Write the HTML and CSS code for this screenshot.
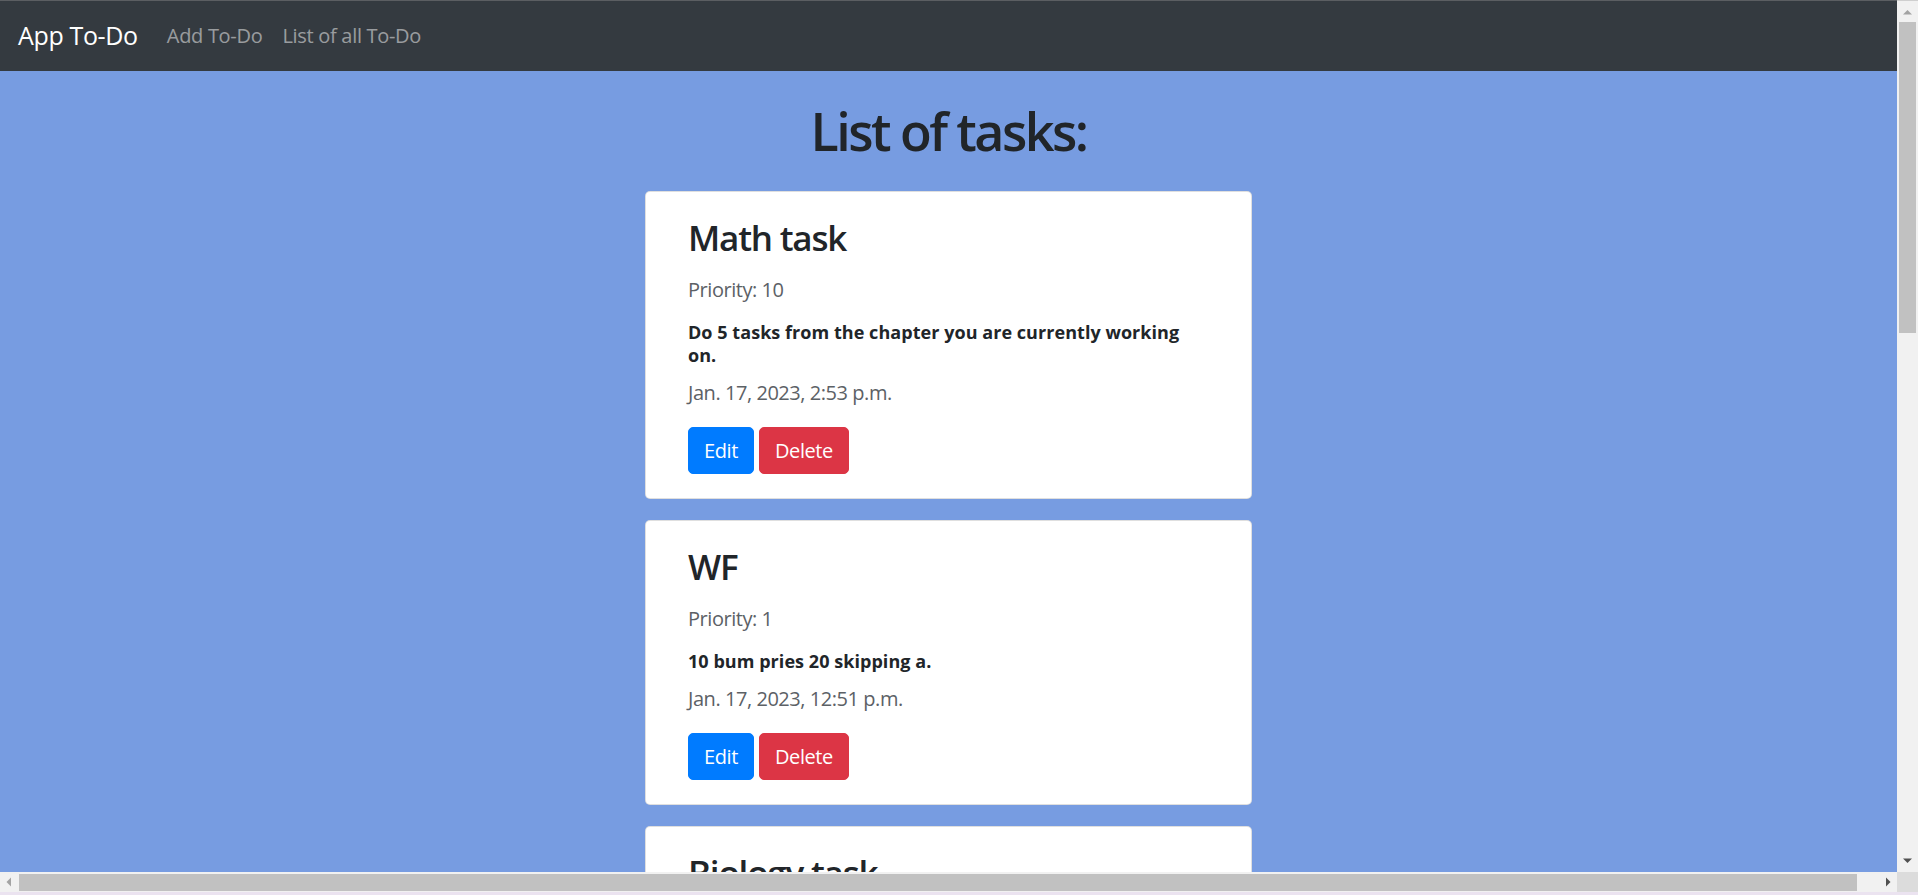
FILE: index.html
```html
<!DOCTYPE html>
<html lang="en">
<head>
<meta charset="utf-8">
<title>App To-Do</title>
<link rel="stylesheet" href="styles.css">
</head>
<body>
<nav class="navbar">
  <a class="brand" href="#">App To-Do</a>
  <ul class="nav">
    <li><a class="nav-link" href="#">Add To-Do</a></li>
    <li><a class="nav-link" href="#">List of all To-Do</a></li>
  </ul>
</nav>
<main class="page">
  <h1 class="page-title">List of tasks:</h1>

  <div class="card">
    <div class="card-body">
      <h3 class="task-title">Math task</h3>
      <p class="task-meta priority">Priority: 10</p>
      <p class="task-desc">Do 5 tasks from the chapter you are currently working on.</p>
      <p class="task-meta date">Jan. 17, 2023, 2:53 p.m.</p>
      <div class="actions">
        <a class="btn btn-edit" href="#">Edit</a>
        <a class="btn btn-delete" href="#">Delete</a>
      </div>
    </div>
  </div>

  <div class="card">
    <div class="card-body">
      <h3 class="task-title">WF</h3>
      <p class="task-meta priority">Priority: 1</p>
      <p class="task-desc">10 bum pries 20 skipping a.</p>
      <p class="task-meta date">Jan. 17, 2023, 12:51 p.m.</p>
      <div class="actions">
        <a class="btn btn-edit" href="#">Edit</a>
        <a class="btn btn-delete" href="#">Delete</a>
      </div>
    </div>
  </div>

  <div class="card">
    <div class="card-body">
      <h3 class="task-title">Biology task</h3>
      <p class="task-meta priority">Priority: 5</p>
      <p class="task-desc">Read the chapter about cells.</p>
      <p class="task-meta date">Jan. 17, 2023, 12:40 p.m.</p>
      <div class="actions">
        <a class="btn btn-edit" href="#">Edit</a>
        <a class="btn btn-delete" href="#">Delete</a>
      </div>
    </div>
  </div>
</main>

<div class="vscroll">
  <svg class="arrow arrow-up" width="21" height="21" viewBox="0 0 21 21"><polygon points="6,13.5 15,13.5 10.5,9" fill="#a3a3a3"/></svg>
  <div class="vthumb"></div>
  <svg class="arrow arrow-down" width="21" height="21" viewBox="0 0 21 21"><polygon points="6,7.5 15,7.5 10.5,12" fill="#505050"/></svg>
</div>
<div class="hscroll">
  <svg class="arrow arrow-left" width="19" height="20" viewBox="0 0 19 20"><polygon points="11,5.5 11,14.5 6.5,10" fill="#a3a3a3"/></svg>
  <div class="hthumb"></div>
  <svg class="arrow arrow-right" width="19" height="20" viewBox="0 0 19 20"><polygon points="8,5.5 8,14.5 12.5,10" fill="#505050"/></svg>
</div>
<div class="scroll-corner"></div>
<div class="desktop-strip"></div>
</body>
</html>
```

FILE: styles.css
```css
* { box-sizing: border-box; }

html, body {
  margin: 0;
  padding: 0;
  height: 100%;
  overflow: hidden;
}

body {
  background: #779ce1;
  font-family: "Open Sans", "Noto Sans", "Liberation Sans", sans-serif;
  font-size: 20px;
  line-height: 1.5;
  color: #212529;
}

a { text-decoration: none; }

/* ---------- navbar ---------- */
.navbar {
  height: 71px;
  border-top: 1px solid #5b5e62;
  background: #343a40;
  display: flex;
  align-items: center;
  padding: 0 18px;
}

.brand {
  font-size: 25px;
  line-height: 37.5px;
  color: #ffffff;
  margin-right: 19px;
  letter-spacing: -0.35px;
}

.nav {
  list-style: none;
  margin: 0;
  padding: 0;
  display: flex;
}

.nav-link {
  display: block;
  padding: 0 10px;
  font-size: 20px;
  line-height: 30px;
  color: rgba(255, 255, 255, 0.5);
  letter-spacing: -0.3px;
}

/* ---------- page ---------- */
.page {
  margin-right: 21px;
  display: flex;
  flex-direction: column;
  align-items: center;
}

.page-title {
  margin: 28.6px 0 29px;
  font-size: 52px;
  line-height: 62.4px;
  font-weight: 600;
  letter-spacing: -2.55px;
  color: #212529;
}

.card {
  width: 607px;
  background: #ffffff;
  border: 1px solid rgba(0, 0, 0, 0.125);
  border-radius: 5px;
  margin-bottom: 21px;
}

.card-body {
  padding: 25px 42px 24px;
}

.task-title {
  margin: 0 0 15.5px;
  font-size: 35px;
  line-height: 42px;
  font-weight: 600;
  letter-spacing: -1.2px;
}

.task-meta {
  margin: 0;
  font-size: 20px;
  line-height: 30px;
  color: #5c6166;
  letter-spacing: -0.45px;
}

.priority { margin-bottom: 16.5px; }
.date { margin-bottom: 19.5px; }

.task-desc {
  max-width: 505px;
  margin: 0 0 10.5px;
  font-size: 18px;
  line-height: 23px;
  font-weight: 700;
  letter-spacing: 0.05px;
}

.actions {
  display: flex;
  gap: 5px;
}

.btn {
  display: inline-block;
  padding: 7.5px 15px;
  font-size: 20px;
  line-height: 30px;
  color: #ffffff;
  border: 1px solid transparent;
  border-radius: 5px;
  letter-spacing: -0.4px;
}

.btn-edit { background: #007bff; border-color: #007bff; }
.btn-delete { background: #dc3545; border-color: #dc3545; }

/* ---------- window scrollbars (overlay) ---------- */
.vscroll {
  position: fixed;
  top: 0;
  right: 0;
  width: 21px;
  height: 872px;
  background: #f1f1f1;
  border-top: 1px solid #cfcfcf;
}

.vscroll .arrow { position: absolute; left: 0; }
.arrow-up { top: 0; }
.arrow-down { bottom: 0; }

.vthumb {
  position: absolute;
  left: 2px;
  top: 21px;
  width: 17px;
  height: 311px;
  background: #c1c1c1;
}

.hscroll {
  position: fixed;
  left: 0;
  top: 872px;
  width: 1897px;
  height: 20px;
  background: #f1f1f1;
}

.hscroll .arrow { position: absolute; top: 0; }
.arrow-left { left: 0; }
.arrow-right { right: 0; left: auto; }

.hthumb {
  position: absolute;
  left: 19px;
  top: 2px;
  width: 1838px;
  height: 17px;
  background: #c1c1c1;
}

.scroll-corner {
  position: fixed;
  left: 1897px;
  top: 872px;
  width: 21px;
  height: 20px;
  background: #dcdcdc;
}

.desktop-strip {
  position: fixed;
  left: 0;
  right: 0;
  bottom: 0;
  height: 3px;
  background: #ebe3f0;
}
```
